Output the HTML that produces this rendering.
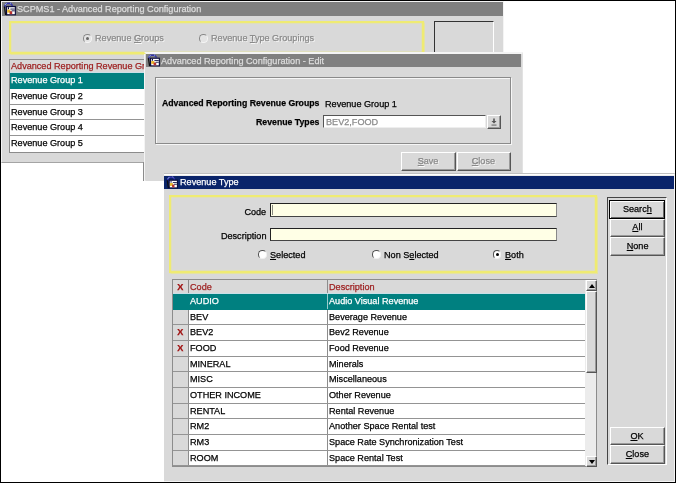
<!DOCTYPE html>
<html>
<head>
<meta charset="utf-8">
<title>Advanced Reporting Configuration</title>
<style>
html,body{margin:0;padding:0;}
body{width:676px;height:483px;overflow:hidden;background:#fff;position:relative;
 font-family:"Liberation Sans",sans-serif;font-size:9.7px;color:#000;line-height:12px;-webkit-text-stroke:0.25px;}
div,span{box-sizing:border-box;}
.abs{position:absolute;}
.frame{position:absolute;left:0;top:0;width:676px;height:483px;border:1px solid #000;z-index:50;pointer-events:none;}
.win{position:absolute;background:#d9d9d9;border:1px solid #f4f4f4;}
.tb{position:absolute;height:14px;background:#808080;color:#dcdcdc;white-space:nowrap;overflow:hidden;}
.tb.act{background:#0a246a;color:#fff;}
.tb .ic{position:absolute;left:0;top:0;width:14px;height:14px;}
.tb .tx{position:absolute;left:15px;top:1px;}
.t{display:inline-block;transform:scaleX(.94);transform-origin:0 50%;white-space:nowrap;}
.tr{display:inline-block;transform:scaleX(.94);transform-origin:100% 50%;white-space:nowrap;}
.tc{display:inline-block;transform:scaleX(.94);transform-origin:50% 50%;white-space:nowrap;}
.ybox{position:absolute;border:2px solid #efeb72;box-shadow:0 0 1px 0.5px rgba(239,235,114,.55), inset 0 0 1px 0.5px rgba(239,235,114,.55);}
.radio{position:absolute;width:8.5px;height:8.5px;border-radius:50%;background:#fff;border:1px solid #505050;border-right-color:#f0f0f0;border-bottom-color:#f0f0f0;}
.radio.on:after{content:"";position:absolute;left:2px;top:2px;width:3px;height:3px;border-radius:50%;background:#000;}
.radio.dis{background:#e4e4e4;border-color:#888 #f4f4f4 #f4f4f4 #888;}
.radio.dis.on:after{background:#666;}
.lbl{position:absolute;white-space:nowrap;}
.dis{color:#8a8a8a;}
.btn.dis,.lbl.dis{text-shadow:1px 1px 0 #f8f8f8;}
.grid{position:absolute;background:#fff;border:1px solid #8c8c8c;overflow:hidden;}
.row{position:absolute;left:0;right:0;border-bottom:1px solid #949494;background:#fff;}
.row.hd{background:#d9d9d9;color:#9c1c1c;border-bottom:1px solid #c8e0e8;line-height:11px;}
.row.hd .cell{padding-top:0;}
#g3 .row.hd .cell{padding-top:0.5px;}
.row.sel{background:#008080;color:#fff;border-bottom-color:#008080;}
.cell{position:absolute;top:0;bottom:0;padding:1px 0 0 0.5px;white-space:nowrap;overflow:hidden;}
.cx{left:0;width:16px;border-right:1px solid #8c8c8c;background:#d9d9d9;color:#a01010;font-weight:bold;text-align:center;padding-left:0;}
.row.sel .cx{background:#008080;border-right-color:#008080;}
.cc{left:16px;width:139px;border-right:1px solid #8c8c8c;}
.row.sel .cc{border-right-color:#9cc;}
.cd{left:155px;right:0;}
.btn{position:absolute;background:#d9d9d9;border:1px solid;border-color:#fff #555 #555 #fff;text-align:center;box-shadow:inset -1px -1px 0 #9a9a9a;}
.btn .tc{position:relative;}
u{text-decoration:underline;}
.sunk{position:absolute;border:1px solid;border-color:#333 #fff #fff #333;}
.inp{position:absolute;background:#ffffe6;border:1px solid;border-color:#222 #888 #444 #222;}
</style>
</head>
<body>

<!-- ================= Window 1 ================= -->
<div class="win" style="left:1px;top:1px;width:503px;height:161.5px;border-bottom-color:#a4a4a4;">
  <div class="tb" style="left:0px;top:0px;width:501px;">
    <svg class="ic" viewBox="0 0 14 14"><path d="M2.8 6 L3 3.2 L4.5 1.4 L8.5 1.2 L10.6 3.8" fill="none" stroke="#3434ac" stroke-width="1.5"/>
      <path d="M3 3 L4.6 1.2 M8 0.9 L9 1.4" fill="none" stroke="#a8c4f4" stroke-width="0.9"/>
      <path d="M2.4 4.5 L3.6 13" fill="none" stroke="#101010" stroke-width="1.3"/>
      <rect x="3.9" y="3.9" width="10" height="9.4" fill="#0c0c3c"/>
      <rect x="5.2" y="5.2" width="7.6" height="7" fill="#fff"/>
      <rect x="5.2" y="7.6" width="3.2" height="3" fill="#e8b828"/>
      <rect x="7.6" y="9.2" width="2.6" height="3" fill="#b83030"/>
      <rect x="8.4" y="6.6" width="4.4" height="0.9" fill="#0c0c3c"/>
      <rect x="9.6" y="8.4" width="3.2" height="0.9" fill="#0c0c3c"/>
      <rect x="6" y="5.2" width="1" height="2" fill="#0c0c3c"/></svg>
    <span class="tx"><span class="t">SCPMS1 - Advanced Reporting Configuration</span></span>
  </div>
  <div class="ybox" style="left:7px;top:19px;width:415px;height:32.5px;"></div>
  <div class="radio dis on" style="left:81px;top:32px;"></div>
  <div class="lbl dis" style="left:93px;top:30px;"><span class="t">Revenue <u>G</u>roups</span></div>
  <div class="radio dis" style="left:197px;top:32px;"></div>
  <div class="lbl dis" style="left:209px;top:30px;"><span class="t">Revenue <u>T</u>ype Groupings</span></div>
  <div class="sunk" style="left:432px;top:19px;width:60px;height:40px;"></div>

  <div class="grid" style="left:7px;top:56.5px;width:300px;height:94.2px;">
    <div class="row hd" style="top:0;height:13.7px;"><div class="cell" style="left:0;width:290px;"><span class="t">Advanced Reporting Revenue Groups</span></div></div>
    <div class="row sel" style="top:13.7px;height:15.7px;"><div class="cell" style="left:0;width:290px;"><span class="t">Revenue Group 1</span></div></div>
    <div class="row" style="top:29.4px;height:15.7px;"><div class="cell" style="left:0;width:290px;"><span class="t">Revenue Group 2</span></div></div>
    <div class="row" style="top:45.1px;height:15.7px;"><div class="cell" style="left:0;width:290px;"><span class="t">Revenue Group 3</span></div></div>
    <div class="row" style="top:60.8px;height:15.7px;"><div class="cell" style="left:0;width:290px;"><span class="t">Revenue Group 4</span></div></div>
    <div class="row" style="top:76.5px;height:15.7px;border-bottom:none;"><div class="cell" style="left:0;width:290px;"><span class="t">Revenue Group 5</span></div></div>
  </div>
</div>

<!-- ================= Window 2 ================= -->
<div class="abs" style="left:143px;top:162px;width:1px;height:18.5px;background:#8c8c8c;"></div>
<div class="win" style="left:144px;top:52px;width:378.5px;height:128.5px;border-width:2px 1px 1px 2px;border-left-color:transparent;border-bottom-color:#d9d9d9;border-right-color:#e2e2e2;background:linear-gradient(to right,#f4f4f4 0,#f4f4f4 1px,#d9d9d9 1px) border-box;">
  <div class="tb" style="left:0px;top:0.3px;width:375px;height:13px;">
    <svg class="ic" viewBox="0 0 14 14" preserveAspectRatio="none" style="top:0;height:13px;left:-0.5px"><path d="M2.8 6 L3 3.2 L4.5 1.4 L8.5 1.2 L10.6 3.8" fill="none" stroke="#3434ac" stroke-width="1.5"/>
      <path d="M3 3 L4.6 1.2 M8 0.9 L9 1.4" fill="none" stroke="#a8c4f4" stroke-width="0.9"/>
      <path d="M2.4 4.5 L3.6 13" fill="none" stroke="#101010" stroke-width="1.3"/>
      <rect x="3.9" y="3.9" width="10" height="9.4" fill="#0c0c3c"/>
      <rect x="5.2" y="5.2" width="7.6" height="7" fill="#fff"/>
      <rect x="5.2" y="7.6" width="3.2" height="3" fill="#e8b828"/>
      <rect x="7.6" y="9.2" width="2.6" height="3" fill="#b83030"/>
      <rect x="8.4" y="6.6" width="4.4" height="0.9" fill="#0c0c3c"/>
      <rect x="9.6" y="8.4" width="3.2" height="0.9" fill="#0c0c3c"/>
      <rect x="6" y="5.2" width="1" height="2" fill="#0c0c3c"/></svg>
    <span class="tx" style="top:0.5px"><span class="t">Advanced Reporting Configuration - Edit</span></span>
  </div>
  <div class="abs" style="left:8.5px;top:23px;width:356px;height:66.5px;border:1px solid #8a8a8a;box-shadow:1px 1px 0 #f6f6f6, inset 1px 1px 0 #f6f6f6;"></div>
  <div class="lbl" style="left:16px;top:42.5px;font-weight:bold;"><span class="t" style="transform:scaleX(.9)">Advanced Reporting Revenue Groups</span></div>
  <div class="lbl" style="left:179px;top:43.5px;"><span class="t">Revenue Group 1</span></div>
  <div class="lbl" style="left:72px;top:61.5px;width:101px;text-align:right;font-weight:bold;"><span class="tr" style="transform:scaleX(.9)">Revenue Types</span></div>
  <div class="inp" style="left:177px;top:61px;width:162.5px;height:13px;background:#fff;border-color:#555 #eee #eee #555;"><span class="t dis" style="position:absolute;left:1.5px;top:0;line-height:11px;">BEV2,FOOD</span></div>
  <div class="btn" style="left:340.5px;top:61px;width:14px;height:13.5px;">
    <svg class="abs" style="left:2px;top:2px;" width="8" height="8" viewBox="0 0 8 8"><path d="M3.2 0.5h1.6v2.5h1.7L4 5.6 1.5 3h1.7z" fill="#555"/><rect x="1.5" y="6.6" width="5" height="0.9" fill="#555"/></svg>
  </div>
  <div class="btn dis" style="left:255px;top:98px;width:54.5px;height:18.5px;line-height:15px;"><span class="tc"><u>S</u>ave</span></div>
  <div class="btn dis" style="left:310.5px;top:98px;width:54.5px;height:18.5px;line-height:15px;"><span class="tc"><u>C</u>lose</span></div>
</div>

<!-- ================= Window 3 ================= -->
<div class="win" style="left:164px;top:173px;width:511px;height:309px;border-top:1px solid #c0c0c0;border-left:none;box-shadow:inset 0 1.5px 0 #fff;">
 <div class="abs" style="left:1px;top:1px;width:509px;height:306px;">
  <div class="tb act" style="left:-1px;top:0.5px;width:510px;height:13px;">
    <svg class="ic" viewBox="0 0 14 14" preserveAspectRatio="none" style="top:0;height:13px;width:13px;left:0.5px"><path d="M2.8 6 L3 3.2 L4.5 1.4 L8.5 1.2 L10.6 3.8" fill="none" stroke="#3434ac" stroke-width="1.5"/>
      <path d="M3 3 L4.6 1.2 M8 0.9 L9 1.4" fill="none" stroke="#a8c4f4" stroke-width="0.9"/>
      <path d="M2.4 4.5 L3.6 13" fill="none" stroke="#101010" stroke-width="1.3"/>
      <rect x="3.9" y="3.9" width="10" height="9.4" fill="#0c0c3c"/>
      <rect x="5.2" y="5.2" width="7.6" height="7" fill="#fff"/>
      <rect x="5.2" y="7.6" width="3.2" height="3" fill="#e8b828"/>
      <rect x="7.6" y="9.2" width="2.6" height="3" fill="#b83030"/>
      <rect x="8.4" y="6.6" width="4.4" height="0.9" fill="#0c0c3c"/>
      <rect x="9.6" y="8.4" width="3.2" height="0.9" fill="#0c0c3c"/>
      <rect x="6" y="5.2" width="1" height="2" fill="#0c0c3c"/></svg>
    <span class="tx" style="top:0.5px;left:15.5px"><span class="t">Revenue Type</span></span>
  </div>
  <div class="ybox" style="left:3.5px;top:19.5px;width:428.5px;height:78px;"></div>

  <div class="lbl" style="left:40px;top:31px;width:61px;text-align:right;"><span class="tr">Code</span></div>
  <div class="inp" style="left:105px;top:28px;width:287px;height:14px;"><div class="abs" style="left:1px;top:1px;width:1px;height:10px;background:#8a8a80;"></div></div>
  <div class="lbl" style="left:40px;top:54.5px;width:61px;text-align:right;"><span class="tr">Description</span></div>
  <div class="inp" style="left:105px;top:52.5px;width:287px;height:13.5px;"></div>

  <div class="radio" style="left:93px;top:75px;"></div>
  <div class="lbl" style="left:105px;top:73.5px;"><span class="t"><u>S</u>elected</span></div>
  <div class="radio" style="left:207px;top:75px;"></div>
  <div class="lbl" style="left:219px;top:73.5px;"><span class="t">Non S<u>e</u>lected</span></div>
  <div class="radio on" style="left:327.5px;top:75px;"></div>
  <div class="lbl" style="left:340px;top:73.5px;"><span class="t"><u>B</u>oth</span></div>

  <!-- grid -->
  <div class="grid" id="g3" style="left:7px;top:104px;width:413.5px;height:188px;">
    <div class="row hd" style="top:0;height:13.9px;"><div class="cell cx"><span class="tc">X</span></div><div class="cell cc"><span class="t">Code</span></div><div class="cell cd"><span class="t">Description</span></div></div>
    <div class="row sel" style="top:13.90px;height:15.68px;"><div class="cell cx"><span class="tc"></span></div><div class="cell cc"><span class="t">AUDIO</span></div><div class="cell cd"><span class="t">Audio Visual Revenue</span></div></div>
    <div class="row" style="top:29.58px;height:15.68px;"><div class="cell cx"><span class="tc"></span></div><div class="cell cc"><span class="t">BEV</span></div><div class="cell cd"><span class="t">Beverage Revenue</span></div></div>
    <div class="row" style="top:45.26px;height:15.68px;"><div class="cell cx"><span class="tc">X</span></div><div class="cell cc"><span class="t">BEV2</span></div><div class="cell cd"><span class="t">Bev2 Revenue</span></div></div>
    <div class="row" style="top:60.94px;height:15.68px;"><div class="cell cx"><span class="tc">X</span></div><div class="cell cc"><span class="t">FOOD</span></div><div class="cell cd"><span class="t">Food Revenue</span></div></div>
    <div class="row" style="top:76.62px;height:15.68px;"><div class="cell cx"><span class="tc"></span></div><div class="cell cc"><span class="t">MINERAL</span></div><div class="cell cd"><span class="t">Minerals</span></div></div>
    <div class="row" style="top:92.30px;height:15.68px;"><div class="cell cx"><span class="tc"></span></div><div class="cell cc"><span class="t">MISC</span></div><div class="cell cd"><span class="t">Miscellaneous</span></div></div>
    <div class="row" style="top:107.98px;height:15.68px;"><div class="cell cx"><span class="tc"></span></div><div class="cell cc"><span class="t">OTHER INCOME</span></div><div class="cell cd"><span class="t">Other Revenue</span></div></div>
    <div class="row" style="top:123.66px;height:15.68px;"><div class="cell cx"><span class="tc"></span></div><div class="cell cc"><span class="t">RENTAL</span></div><div class="cell cd"><span class="t">Rental Revenue</span></div></div>
    <div class="row" style="top:139.34px;height:15.68px;"><div class="cell cx"><span class="tc"></span></div><div class="cell cc"><span class="t">RM2</span></div><div class="cell cd"><span class="t">Another Space Rental test</span></div></div>
    <div class="row" style="top:155.02px;height:15.68px;"><div class="cell cx"><span class="tc"></span></div><div class="cell cc"><span class="t">RM3</span></div><div class="cell cd"><span class="t">Space Rate Synchronization Test</span></div></div>
    <div class="row" style="top:170.70px;height:15.68px;"><div class="cell cx"><span class="tc"></span></div><div class="cell cc"><span class="t">ROOM</span></div><div class="cell cd"><span class="t">Space Rental Test</span></div></div>
  </div>
  <!-- scrollbar -->
  <div class="abs" style="left:420px;top:104px;width:12px;height:188px;background:#ececec;border:1px solid #8c8c8c;border-left:none;"></div>
  <div class="btn" style="left:421px;top:105px;width:10.5px;height:11px;"><svg class="abs" style="left:1.5px;top:3px" width="6" height="4" viewBox="0 0 6 4"><path d="M3 0L6 4H0z" fill="#000"/></svg></div>
  <div class="btn" style="left:421px;top:116px;width:10.5px;height:82px;"></div>
  <div class="btn" style="left:421px;top:281px;width:10.5px;height:10.5px;"><svg class="abs" style="left:1.5px;top:3px" width="6" height="4" viewBox="0 0 6 4"><path d="M0 0H6L3 4z" fill="#000"/></svg></div>

  <!-- button panel -->
  <div class="sunk" style="left:442px;top:22px;width:59.5px;height:267.5px;border-color:#444 #fff #fff #444;"></div>
  <div class="btn" style="left:444px;top:25px;width:56px;height:18.5px;line-height:15px;border-color:#000;box-shadow:inset 1px 1px 0 #fff, inset -1px -1px 0 #666;"><span class="tc">Searc<u>h</u></span></div>
  <div class="btn" style="left:445px;top:44px;width:55px;height:18px;line-height:14px;"><span class="tc"><u>A</u>ll</span></div>
  <div class="btn" style="left:445px;top:62px;width:55px;height:18.5px;line-height:15px;"><span class="tc"><u>N</u>one</span></div>
  <div class="btn" style="left:445px;top:252px;width:55px;height:18px;line-height:15px;"><span class="tc"><u>O</u>K</span></div>
  <div class="btn" style="left:445px;top:270px;width:55px;height:18.5px;line-height:15px;"><span class="tc"><u>C</u>lose</span></div>
 </div>
</div>

<div class="frame"></div>



</body>
</html>
